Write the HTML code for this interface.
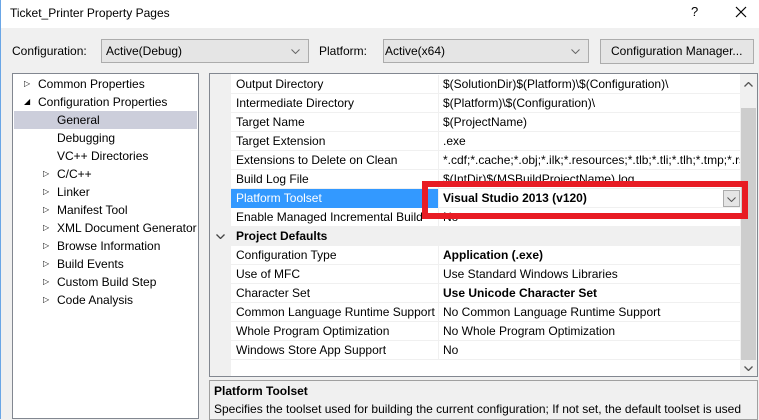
<!DOCTYPE html>
<html><head><style>
*{margin:0;padding:0;box-sizing:border-box}
body{width:759px;height:419px;overflow:hidden;background:#f0f0f0;font-family:"Liberation Sans",sans-serif;font-size:12px;color:#000;position:relative}
.a{position:absolute;white-space:nowrap}
.combo{position:absolute;background:#e5e5e5;border:1px solid #acacac;height:24px;line-height:22px;padding-left:4px}
.tree div{position:absolute;left:0;height:18px;line-height:18px;width:184px}
.row{position:absolute;left:21px;width:510px;height:19px;line-height:18px;border-bottom:1px solid #f0f0f0;background:#fff}
.row .l{position:absolute;left:5px}
.row .v{position:absolute;left:207px;border-left:1px solid #f0f0f0;padding-left:4px;height:19px;width:303px;overflow:hidden}
svg.c{position:absolute}
</style></head><body>
<div class="a" style="left:0;top:0;width:759px;height:28px;background:#fff"></div>
<div class="a" style="left:0;top:0;width:1px;height:419px;background:#6aa6e6"></div>
<div class="a" style="left:10px;top:6px;font-size:12px">Ticket_Printer Property Pages</div>
<div class="a" style="left:691px;top:4px;font-size:13px">?</div>
<svg class="c" style="left:735px;top:6px" width="12" height="12"><path d="M1 1L11 11M11 1L1 11" stroke="#000" stroke-width="1.2"/></svg>

<div class="a" style="left:12px;top:44px">Configuration:</div>
<div class="combo" style="left:101px;top:39px;width:208px">Active(Debug)<svg class="c" style="right:8px;top:9px" width="9" height="5"><path d="M0.5 0.5L4.5 4.5L8.5 0.5" stroke="#666" fill="none"/></svg></div>
<div class="a" style="left:319px;top:44px">Platform:</div>
<div class="combo" style="left:383px;top:39px;width:206px;padding-left:1px">Active(x64)<svg class="c" style="right:8px;top:9px" width="9" height="5"><path d="M0.5 0.5L4.5 4.5L8.5 0.5" stroke="#666" fill="none"/></svg></div>
<div class="combo" style="left:600px;top:39px;width:154px;padding-left:10px;line-height:23px;height:25px">Configuration Manager...</div>

<div class="a tree" style="left:12px;top:73px;width:187px;height:346px;background:#fff;border:1px solid #828790">
<div style="top:1px"><span class="a" style="left:11px;font-size:8px;top:0">▷</span><span class="a" style="left:25px">Common Properties</span></div>
<div style="top:19px"><span class="a" style="left:11px;font-size:8px;top:0">◢</span><span class="a" style="left:25px">Configuration Properties</span></div>
<div style="top:37px;left:1px;background:#cccedb;width:183px"><span class="a" style="left:43px">General</span></div>
<div style="top:55px"><span class="a" style="left:44px">Debugging</span></div>
<div style="top:73px"><span class="a" style="left:44px">VC++ Directories</span></div>
<div style="top:91px"><span class="a" style="left:30px;font-size:8px">▷</span><span class="a" style="left:44px">C/C++</span></div>
<div style="top:109px"><span class="a" style="left:30px;font-size:8px">▷</span><span class="a" style="left:44px">Linker</span></div>
<div style="top:127px"><span class="a" style="left:30px;font-size:8px">▷</span><span class="a" style="left:44px">Manifest Tool</span></div>
<div style="top:145px"><span class="a" style="left:30px;font-size:8px">▷</span><span class="a" style="left:44px">XML Document Generator</span></div>
<div style="top:163px"><span class="a" style="left:30px;font-size:8px">▷</span><span class="a" style="left:44px">Browse Information</span></div>
<div style="top:181px"><span class="a" style="left:30px;font-size:8px">▷</span><span class="a" style="left:44px">Build Events</span></div>
<div style="top:199px"><span class="a" style="left:30px;font-size:8px">▷</span><span class="a" style="left:44px">Custom Build Step</span></div>
<div style="top:217px"><span class="a" style="left:30px;font-size:8px">▷</span><span class="a" style="left:44px">Code Analysis</span></div>
</div>

<div class="a" style="left:209px;top:73px;width:549px;height:304px;background:#fff;border:1px solid #828790;overflow:hidden">
<div class="a" style="left:0;top:0;width:21px;height:302px;background:#f0f0f0"></div>
<div class="row" style="top:1px"><span class="l">Output Directory</span><span class="v">$(SolutionDir)$(Platform)\$(Configuration)\</span></div>
<div class="row" style="top:20px"><span class="l">Intermediate Directory</span><span class="v">$(Platform)\$(Configuration)\</span></div>
<div class="row" style="top:39px"><span class="l">Target Name</span><span class="v">$(ProjectName)</span></div>
<div class="row" style="top:58px"><span class="l">Target Extension</span><span class="v">.exe</span></div>
<div class="row" style="top:77px"><span class="l">Extensions to Delete on Clean</span><span class="v">*.cdf;*.cache;*.obj;*.ilk;*.resources;*.tlb;*.tli;*.tlh;*.tmp;*.rsp</span></div>
<div class="row" style="top:96px"><span class="l">Build Log File</span><span class="v">$(IntDir)$(MSBuildProjectName).log</span></div>
<div class="row" style="top:115px"><span class="a" style="left:0;width:207px;height:19px;background:#3399ff;color:#fff;padding-left:5px">Platform Toolset</span><span class="v" style="font-weight:bold">Visual Studio 2013 (v120)</span><span class="a" style="left:492px;top:1px;width:17px;height:17px;border:1px solid #acacac;background:#e5e5e5"><svg class="c" style="left:3px;top:6px" width="9" height="5"><path d="M0.5 0.5L4.5 4.5L8.5 0.5" stroke="#555" fill="none"/></svg></span></div>
<div class="row" style="top:134px"><span class="l">Enable Managed Incremental Build</span><span class="v">No</span></div>
<div class="row" style="top:153px;left:0;width:531px;background:#f0f0f0;font-weight:bold"><svg class="c" style="left:6px;top:7px" width="9" height="5"><path d="M0.5 0.5L4.5 4.5L8.5 0.5" stroke="#444" fill="none" stroke-width="1.3"/></svg><span class="a" style="left:26px">Project Defaults</span></div>
<div class="row" style="top:172px"><span class="l">Configuration Type</span><span class="v" style="font-weight:bold">Application (.exe)</span></div>
<div class="row" style="top:191px"><span class="l">Use of MFC</span><span class="v">Use Standard Windows Libraries</span></div>
<div class="row" style="top:210px"><span class="l">Character Set</span><span class="v" style="font-weight:bold">Use Unicode Character Set</span></div>
<div class="row" style="top:229px"><span class="l">Common Language Runtime Support</span><span class="v">No Common Language Runtime Support</span></div>
<div class="row" style="top:248px"><span class="l">Whole Program Optimization</span><span class="v">No Whole Program Optimization</span></div>
<div class="row" style="top:267px"><span class="l">Windows Store App Support</span><span class="v">No</span></div>
<div class="a" style="left:530px;top:0;width:17px;height:302px;background:#f0f0f0"></div>
<svg class="c" style="left:534px;top:8px" width="9" height="5"><path d="M0.5 4.5L4.5 0.5L8.5 4.5" stroke="#555" fill="none" stroke-width="1.3"/></svg>
<div class="a" style="left:531px;top:34px;width:15px;height:252px;background:#cdcdcd"></div>
<svg class="c" style="left:534px;top:292px" width="9" height="5"><path d="M0.5 0.5L4.5 4.5L8.5 0.5" stroke="#555" fill="none" stroke-width="1.3"/></svg>
</div>

<div class="a" style="left:422px;top:181px;width:326px;height:38px;border:6px solid #e81c24"></div>

<div class="a" style="left:209px;top:380px;width:549px;height:40px;border:1px solid #a0a0a0;background:#f0f0f0">
<div class="a" style="left:4px;top:3px;font-weight:bold">Platform Toolset</div>
<div class="a" style="left:4px;top:21px">Specifies the toolset used for building the current configuration; If not set, the default toolset is used</div>
</div>
</body></html>
